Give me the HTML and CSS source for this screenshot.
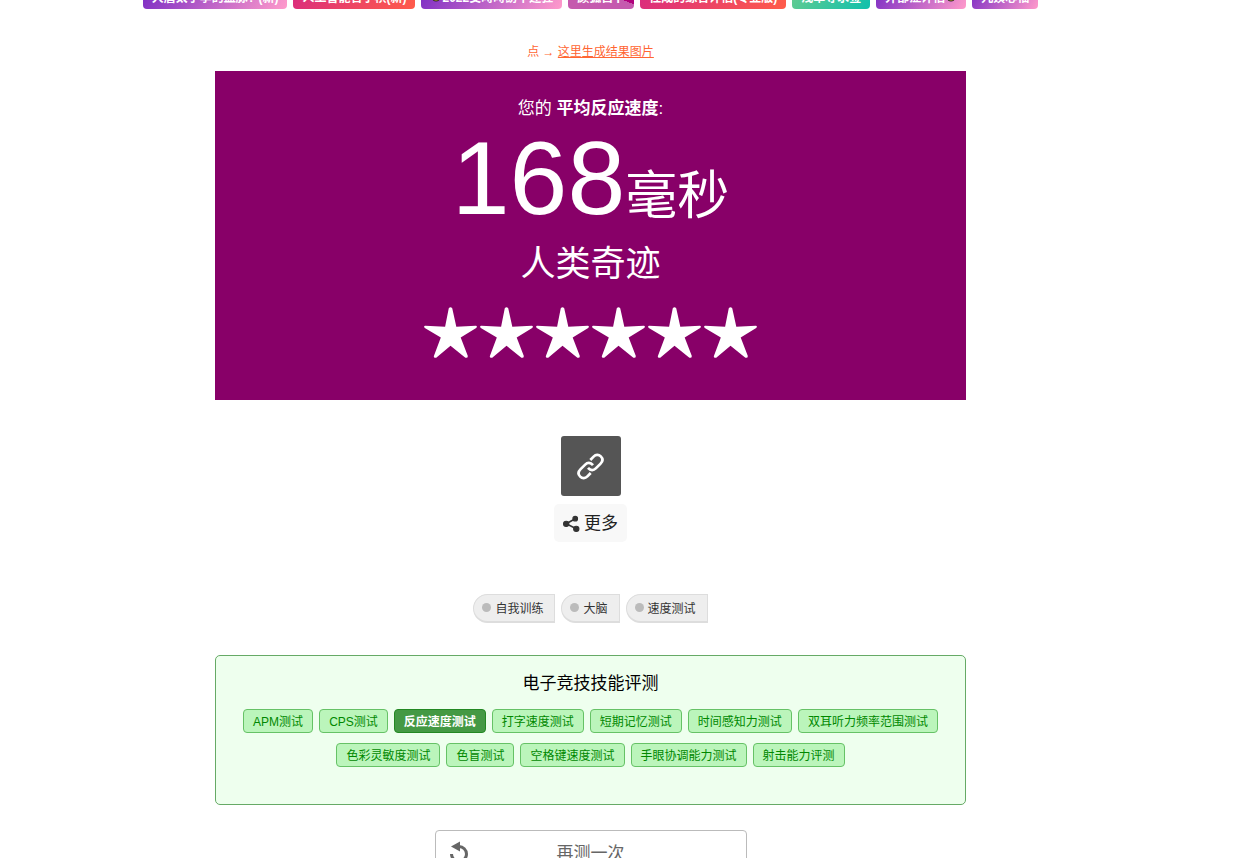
FILE: index.html
```html
<!DOCTYPE html>
<html lang="zh-CN">
<head>
<meta charset="utf-8">
<meta name="viewport" content="width=device-width, initial-scale=1">
<title>反应速度测试</title>
<link rel="stylesheet" href="styles.css">
</head>
<body>
<div class="page">
  <nav class="promo">
    <a class="promo-tag violet" href="#">大唐太子李的血脉? (新)</a>
    <a class="promo-tag red" href="#">人工智能官子棋(新)</a>
    <a class="promo-tag violet" href="#"><svg class="face" viewBox="0 0 12 12"><circle cx="6" cy="6" r="5" fill="#ffd91a" stroke="#222"/></svg>2022受時時訪不迷狂</a>
    <a class="promo-tag magenta" href="#">颜狐自卜</a>
    <a class="promo-tag red" href="#">性成的综合评估(专业版)</a>
    <a class="promo-tag teal" href="#">浅草寺求签</a>
    <a class="promo-tag violet" href="#">外部症评估<svg class="face" viewBox="0 0 12 12"><circle cx="6" cy="6" r="5" fill="#ffd91a" stroke="#222"/></svg></a>
    <a class="promo-tag violet" href="#">九姨心福</a>
  </nav>

  <main class="content">
    <p class="generate">点 → <a href="#">这里生成结果图片</a></p>

    <section class="result">
      <p class="result-label">您的 <strong>平均反应速度</strong>:</p>
      <p class="score">168<span class="unit">毫秒</span></p>
      <p class="rank">人类奇迹</p>
      <div class="stars" role="img" aria-label="6">
        <svg class="star" viewBox="0 0 52 50"><use href="#star"/></svg>
        <svg class="star" viewBox="0 0 52 50"><use href="#star"/></svg>
        <svg class="star" viewBox="0 0 52 50"><use href="#star"/></svg>
        <svg class="star" viewBox="0 0 52 50"><use href="#star"/></svg>
        <svg class="star" viewBox="0 0 52 50"><use href="#star"/></svg>
        <svg class="star" viewBox="0 0 52 50"><path id="star" fill="#fff" d="M24.3 1.2Q26 -.8 27.7 1.2L31.700 19.300L50.800 18.400Q52.800 18.800 51.200 20.600L36 30L43 48Q43 50.400 40.600 49.700L26 38L12 49.700Q9.200 50.400 9.700 48L16.500 30L.8 20.600Q-.8 18.800 1.200 18.400L20.700 19.300Z"/></svg>
      </div>
    </section>

    <div class="share">
      <button class="link-button" type="button" aria-label="link">
        <svg viewBox="0 0 32 32" fill="none" stroke="#fff" stroke-width="2.700" stroke-linejoin="round"><path id="loop" d="M15.300 10L18.600 6.600C20.800 4.400 23.600 4.200 25.800 6.400C28 8.600 27.800 11.400 25.600 13.600L20.800 18.400C18.600 20.600 15.600 20.800 13 17.800"/><use href="#loop" transform="rotate(180 15.500 16.500)"/></svg>
      </button>
      <button class="more-button" type="button">
        <svg viewBox="0 0 16 16" fill="#333" stroke="#333"><path fill="none" stroke-width="1.500" d="M11.500 3.500L3 8.300L12.500 13"/><circle cx="11.500" cy="3.500" r="2.200"/><circle cx="3" cy="8.300" r="2.500"/><circle cx="12.500" cy="13" r="2.500"/></svg>
        <span>更多</span>
      </button>
    </div>

    <nav class="topics">
      <a class="topic" href="#">自我训练</a>
      <a class="topic" href="#">大脑</a>
      <a class="topic" href="#">速度测试</a>
    </nav>

    <section class="skills">
      <h2 class="skills-title">电子竞技技能评测</h2>
      <div class="skill-list">
        <a class="skill" href="#">APM测试</a>
        <a class="skill" href="#">CPS测试</a>
        <a class="skill current" href="#">反应速度测试</a>
        <a class="skill" href="#">打字速度测试</a>
        <a class="skill" href="#">短期记忆测试</a>
        <a class="skill" href="#">时间感知力测试</a>
        <a class="skill" href="#">双耳听力频率范围测试</a>
        <a class="skill" href="#">色彩灵敏度测试</a>
        <a class="skill" href="#">色盲测试</a>
        <a class="skill" href="#">空格键速度测试</a>
        <a class="skill" href="#">手眼协调能力测试</a>
        <a class="skill" href="#">射击能力评测</a>
      </div>
    </section>

    <button class="retry" type="button">
      <svg viewBox="0 0 20 24" fill="none"><path d="M10 5.500A7.500 7.500 0 1 1 2.500 13" stroke="#666" stroke-width="3"/><path d="M2 5.500L11 .5V10.500Z" fill="#666"/></svg>
      <span>再测一次</span>
    </button>
  </main>
</div>
</body>
</html>
```
FILE: styles.css
```css
* {
  box-sizing: border-box;
}

body {
  margin: 0;
  background: #fff;
  color: #000;
  font-family: "Liberation Sans", "Noto Sans CJK SC", sans-serif;
  font-size: 12px;
}

p,
h2 {
  margin: 0;
  font-weight: 400;
}

a {
  color: inherit;
  text-decoration: none;
}

button {
  margin: 0;
  border: 0;
  font: inherit;
  cursor: pointer;
}

.page {
  height: 100vh;
  padding-right: 55px;
  overflow: hidden;
}

.promo {
  display: flex;
  justify-content: center;
  gap: 6px;
  margin-top: -15px;
}

.promo-tag {
  display: flex;
  align-items: center;
  height: 24px;
  padding: 0 9px 2px;
  border-radius: 4px;
  color: #fff;
  font-weight: 700;
  white-space: nowrap;
}

.violet {
  background: linear-gradient(120deg, #7b2cc4, #ff9acb);
}

.red {
  background: linear-gradient(120deg, #d92b7f, #ff5c4a);
}

.magenta {
  background: linear-gradient(20deg, #c55aae 0 60%, #b0007c 60%);
}

.teal {
  background: linear-gradient(120deg, #66cc8f, #10c0ac);
}

.face {
  width: 12px;
  height: 12px;
}

.content {
  display: flex;
  flex-direction: column;
  align-items: center;
  width: 100%;
  max-width: 751px;
  margin: 0 auto;
}

.generate {
  margin-top: 34px;
  color: #ff6633;
  line-height: 18px;
}

.generate a {
  text-decoration: underline;
}

.result {
  width: 100%;
  margin-top: 10px;
  padding: 25px 0 42px;
  background: #880068;
  color: #fff;
  text-align: center;
}

.result-label {
  font-size: 17px;
  line-height: 26px;
}

.score {
  font-size: 104px;
  line-height: 112px;
}

.unit {
  font-size: 52px;
  line-height: 52px;
}

.rank {
  margin-top: 6px;
  font-size: 35px;
  line-height: 48px;
}

.stars {
  display: flex;
  justify-content: center;
  gap: 3px;
  margin-top: 19px;
}

.star {
  width: 53px;
  height: 51px;
}

.share {
  display: flex;
  flex-direction: column;
  align-items: center;
  gap: 8px;
  margin-top: 36px;
}

.link-button {
  display: grid;
  place-items: center;
  width: 60px;
  height: 60px;
  padding: 0;
  border-radius: 3px;
  background: #555;
}

.link-button svg {
  width: 32px;
  height: 32px;
}

.more-button {
  display: flex;
  align-items: center;
  gap: 4px;
  height: 38px;
  padding: 0 9px;
  border-radius: 5px;
  background: #f8f8f8;
  color: #222;
  font-size: 17px;
}

.more-button svg {
  width: 17px;
  height: 17px;
}

.more-button span,
.retry span {
  padding-bottom: 4px;
}

.topics {
  display: flex;
  gap: 6px;
  margin-top: 52px;
}

.topic {
  display: flex;
  align-items: center;
  gap: 4px;
  height: 29px;
  padding: 0 11px 1px 8px;
  border: 1px solid #ddd;
  border-bottom-width: 2px;
  border-radius: 15px 0 0 15px;
  background: #eee;
  color: #333;
}

.topic::before {
  content: "";
  width: 9px;
  height: 9px;
  border-radius: 50%;
  background: #bbb;
}

.skills {
  width: 100%;
  margin-top: 32px;
  padding: 15px 20px 37px;
  border: 1px solid #66aa66;
  border-radius: 5px;
  background: #eeffee;
}

.skills-title {
  font-size: 17px;
  line-height: 26px;
  text-align: center;
}

.skill-list {
  display: flex;
  flex-wrap: wrap;
  justify-content: center;
  gap: 10px 6px;
  margin-top: 12px;
}

.skill {
  height: 24px;
  padding: 0 9px;
  border: 1px solid #66c266;
  border-radius: 4px;
  background: #bbf5bb;
  color: #008800;
  line-height: 24px;
}

.skill.current {
  border-color: #228822;
  background: #449944;
  color: #fff;
  font-weight: 700;
}

.retry {
  display: grid;
  grid-template-columns: 20px 1fr 20px;
  align-items: center;
  width: 312px;
  height: 46px;
  margin-top: 25px;
  padding: 0 13px;
  border: 1px solid #bbb;
  border-radius: 4px;
  background: #fff;
  color: #666;
  font-size: 17px;
}

.retry svg {
  width: 20px;
  height: 24px;
}
```
